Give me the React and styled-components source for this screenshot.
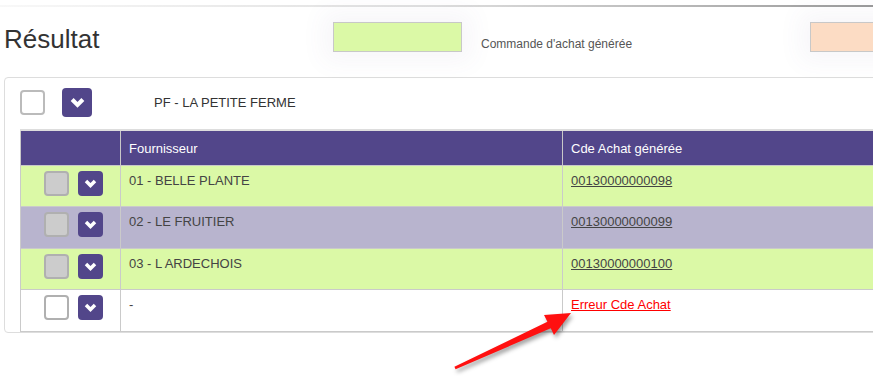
import React from 'react';
import styled, { createGlobalStyle } from 'styled-components';

const GlobalStyle = createGlobalStyle`
  html, body { margin: 0; padding: 0; background: #fff; overflow: hidden; }
  body { font-family: "Liberation Sans", Arial, sans-serif; font-size: 13px; color: #333; }
`;

const PURPLE = '#52468a';
const GREEN = '#dbf9a6';
const LAVENDER = '#b8b4ce';
const PEACH = '#fcdcc4';

const Page = styled.div`
  position: relative;
  width: 1000px;
  height: 384px;
`;

const TopRule = styled.div`
  margin-top: 5px;
  width: 873px;
  height: 2px;
  background: linear-gradient(to right, #f8f8f8 0%, #dedede 50%, #9a9a9a 100%);
`;

const Header = styled.div`
  display: flex;
  align-items: flex-start;
  height: 70px;
  padding-top: 15px;
  box-sizing: border-box;
`;

const Title = styled.h2`
  margin: 2px 0 0 4px;
  flex: 0 0 329px;
  font-size: 26px;
  line-height: 30px;
  font-weight: normal;
  color: #333;
`;

const LegendItem = styled.div`
  display: flex;
  align-items: flex-start;
  flex: 0 0 477px;
`;

const Swatch = styled.div`
  width: 129px;
  height: 30px;
  box-sizing: border-box;
  border: 1px solid #c8c8c8;
  background: ${p => p.$color};
  box-shadow: 0 0 24px 10px rgba(90, 70, 140, 0.05);
`;

const LegendLabel = styled.span`
  margin: 15px 0 0 19px;
  font-size: 12px;
  line-height: 14px;
  color: #555;
`;

const Panel = styled.div`
  margin-left: 4px;
  border: 1px solid #ddd;
  border-radius: 4px;
  padding: 10px 0 0 15px;
  box-sizing: border-box;
`;

const GroupRow = styled.div`
  display: flex;
  align-items: center;
  height: 29px;
  margin-bottom: 12px;
`;

const CheckBox = styled.span`
  display: inline-block;
  flex: 0 0 auto;
  width: 25px;
  height: 25px;
  box-sizing: border-box;
  border: 2px solid ${p => p.$border || '#b4b4b4'};
  border-radius: 4px;
  background: ${p => p.$fill || '#fff'};
`;

const ToggleButton = styled.button`
  display: flex;
  align-items: center;
  justify-content: center;
  flex: 0 0 auto;
  width: ${p => p.$w}px;
  height: ${p => p.$h}px;
  margin-left: ${p => p.$gap}px;
  padding: 0;
  border: none;
  border-radius: 4px;
  background: ${PURPLE};
`;

const GroupLabel = styled.span`
  margin-left: 62px;
  font-size: 13px;
  color: #333;
`;

const Table = styled.table`
  border-collapse: collapse;
  table-layout: fixed;
  width: 960px;
  border-top: 2px solid #ddd;
`;

const HeadCell = styled.th`
  height: 35px;
  padding: 1px 8px 0;
  box-sizing: border-box;
  background: ${PURPLE};
  color: #fff;
  font-weight: normal;
  font-size: 13px;
  text-align: left;
  vertical-align: middle;
  border-left: 1px solid #c8c8c8;
  border-bottom: 1px solid #c8c8c8;
`;

const Row = styled.tr`
  background: ${p => p.$bg};
`;

const Cell = styled.td`
  height: 41.5px;
  box-sizing: border-box;
  padding: 5px 8px 0;
  vertical-align: top;
  line-height: 19px;
  color: #444;
  border: 1px solid #cacaca;
  border-top: none;
`;

const Controls = styled.div`
  display: flex;
  justify-content: center;
  padding-left: 5px;
`;

const OrderLink = styled.a`
  color: ${p => (p.$error ? '#ff0000' : '#444')};
  text-decoration: underline;
`;

const Overlay = styled.svg`
  position: absolute;
  left: 0;
  top: 0;
  pointer-events: none;
  filter: drop-shadow(2px 3px 2px rgba(0, 0, 0, 0.38));
`;

const Chevron = ({ w = 14, h = 10 }) => (
  <svg width={w} height={h} viewBox="0 0 14 10">
    <path d="M2 2.2 L7 7.2 L12 2.2" fill="none" stroke="#fff" strokeWidth="3.9" strokeLinejoin="miter" />
  </svg>
);

const rows = [
  { bg: GREEN, name: '01 - BELLE PLANTE', order: '00130000000098', checkFill: '#cccccc', checkBorder: '#b0b0b0' },
  { bg: LAVENDER, name: '02 - LE FRUITIER', order: '00130000000099', checkFill: '#cccccc', checkBorder: '#b0b0b0' },
  { bg: GREEN, name: '03 - L ARDECHOIS', order: '00130000000100', checkFill: '#cccccc', checkBorder: '#b0b0b0' },
  { bg: '#fff', name: '-', order: 'Erreur Cde Achat', error: true, checkFill: '#fff', checkBorder: '#b0b0b0' },
];

export default function App() {
  return (
    <>
      <GlobalStyle />
      <Page>
        <TopRule />
        <Header>
          <Title>Résultat</Title>
          <LegendItem>
            <Swatch $color={GREEN} />
            <LegendLabel>Commande d'achat générée</LegendLabel>
          </LegendItem>
          <LegendItem>
            <Swatch $color={PEACH} />
          </LegendItem>
        </Header>
        <Panel>
          <GroupRow>
            <CheckBox $border="#bbbbbb" />
            <ToggleButton $w={30} $h={29} $gap={17}>
              <Chevron w={15} h={11} />
            </ToggleButton>
            <GroupLabel>PF - LA PETITE FERME</GroupLabel>
          </GroupRow>
          <Table>
            <colgroup>
              <col style={{ width: 100 }} />
              <col style={{ width: 442 }} />
              <col />
            </colgroup>
            <thead>
              <tr>
                <HeadCell />
                <HeadCell>Fournisseur</HeadCell>
                <HeadCell>Cde Achat générée</HeadCell>
              </tr>
            </thead>
            <tbody>
              {rows.map(r => (
                <Row key={r.order} $bg={r.bg}>
                  <Cell>
                    <Controls>
                      <CheckBox $fill={r.checkFill} $border={r.checkBorder} />
                      <ToggleButton $w={25} $h={25} $gap={9}>
                        <Chevron w={13} h={9} />
                      </ToggleButton>
                    </Controls>
                  </Cell>
                  <Cell>{r.name}</Cell>
                  <Cell>
                    <OrderLink href="#" $error={r.error}>{r.order}</OrderLink>
                  </Cell>
                </Row>
              ))}
            </tbody>
          </Table>
        </Panel>
        <Overlay width="873" height="384" viewBox="0 0 873 384">
          <polygon
            points="454.4,361.8 547.4,316.7 544,310 571,308 554,330 550.7,323.3 455.6,364.2"
            fill="#ff1010"
          />
        </Overlay>
      </Page>
    </>
  );
}
